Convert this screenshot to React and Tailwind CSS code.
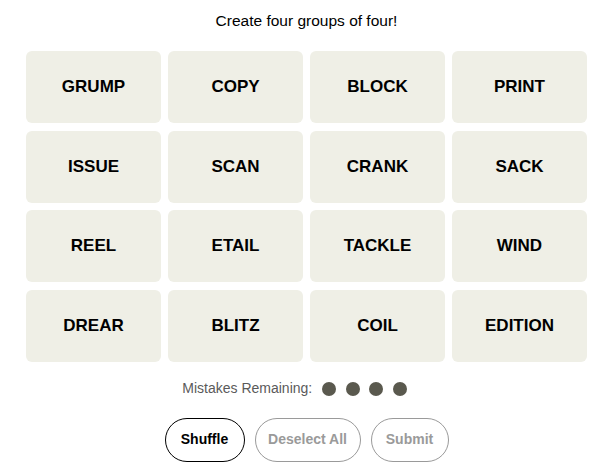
import React from 'react';

const words = [
  'GRUMP', 'COPY', 'BLOCK', 'PRINT',
  'ISSUE', 'SCAN', 'CRANK', 'SACK',
  'REEL', 'ETAIL', 'TACKLE', 'WIND',
  'DREAR', 'BLITZ', 'COIL', 'EDITION',
];

export default function App() {
  return (
    <div
      className="w-[606px] h-[476px] bg-white pl-[26px]"
      style={{ fontFamily: '"Liberation Sans", Arial, sans-serif' }}
    >
      <div className="w-[561px] flex flex-col items-center">
        <p className="mt-[11px] h-[20px] text-[15.5px] leading-[20px] text-black">Create four groups of four!</p>

        <div className="mt-[20px] grid grid-cols-4 gap-x-[7px] gap-y-[7.5px] w-full">
          {words.map((w) => (
            <div
              key={w}
              className="h-[72px] rounded-[6px] bg-[#efefe6] flex items-center justify-center text-[17px] font-bold text-black"
            >
              {w}
            </div>
          ))}
        </div>

        <div className="mt-[18px] flex items-center h-[18px] pr-[24px]">
          <span className="text-[14px] text-[#5a5a5a] mr-[10px]">Mistakes Remaining:</span>
          <div className="flex gap-[9.5px]">
            {[0, 1, 2, 3].map((i) => (
              <span key={i} className="w-[14px] h-[14px] rounded-full bg-[#5a594e]" />
            ))}
          </div>
        </div>

        <div className="mt-[20px] flex gap-[10px]">
          <button className="w-[80px] h-[44px] rounded-full border border-black text-[14px] font-bold text-black">
            Shuffle
          </button>
          <button className="w-[106px] h-[44px] rounded-full border border-[#9a9a9a] text-[14px] font-bold text-[#9a9a9a]">
            Deselect All
          </button>
          <button className="w-[78px] h-[44px] rounded-full border border-[#9a9a9a] text-[14px] font-bold text-[#9a9a9a]">
            Submit
          </button>
        </div>
      </div>
    </div>
  );
}
